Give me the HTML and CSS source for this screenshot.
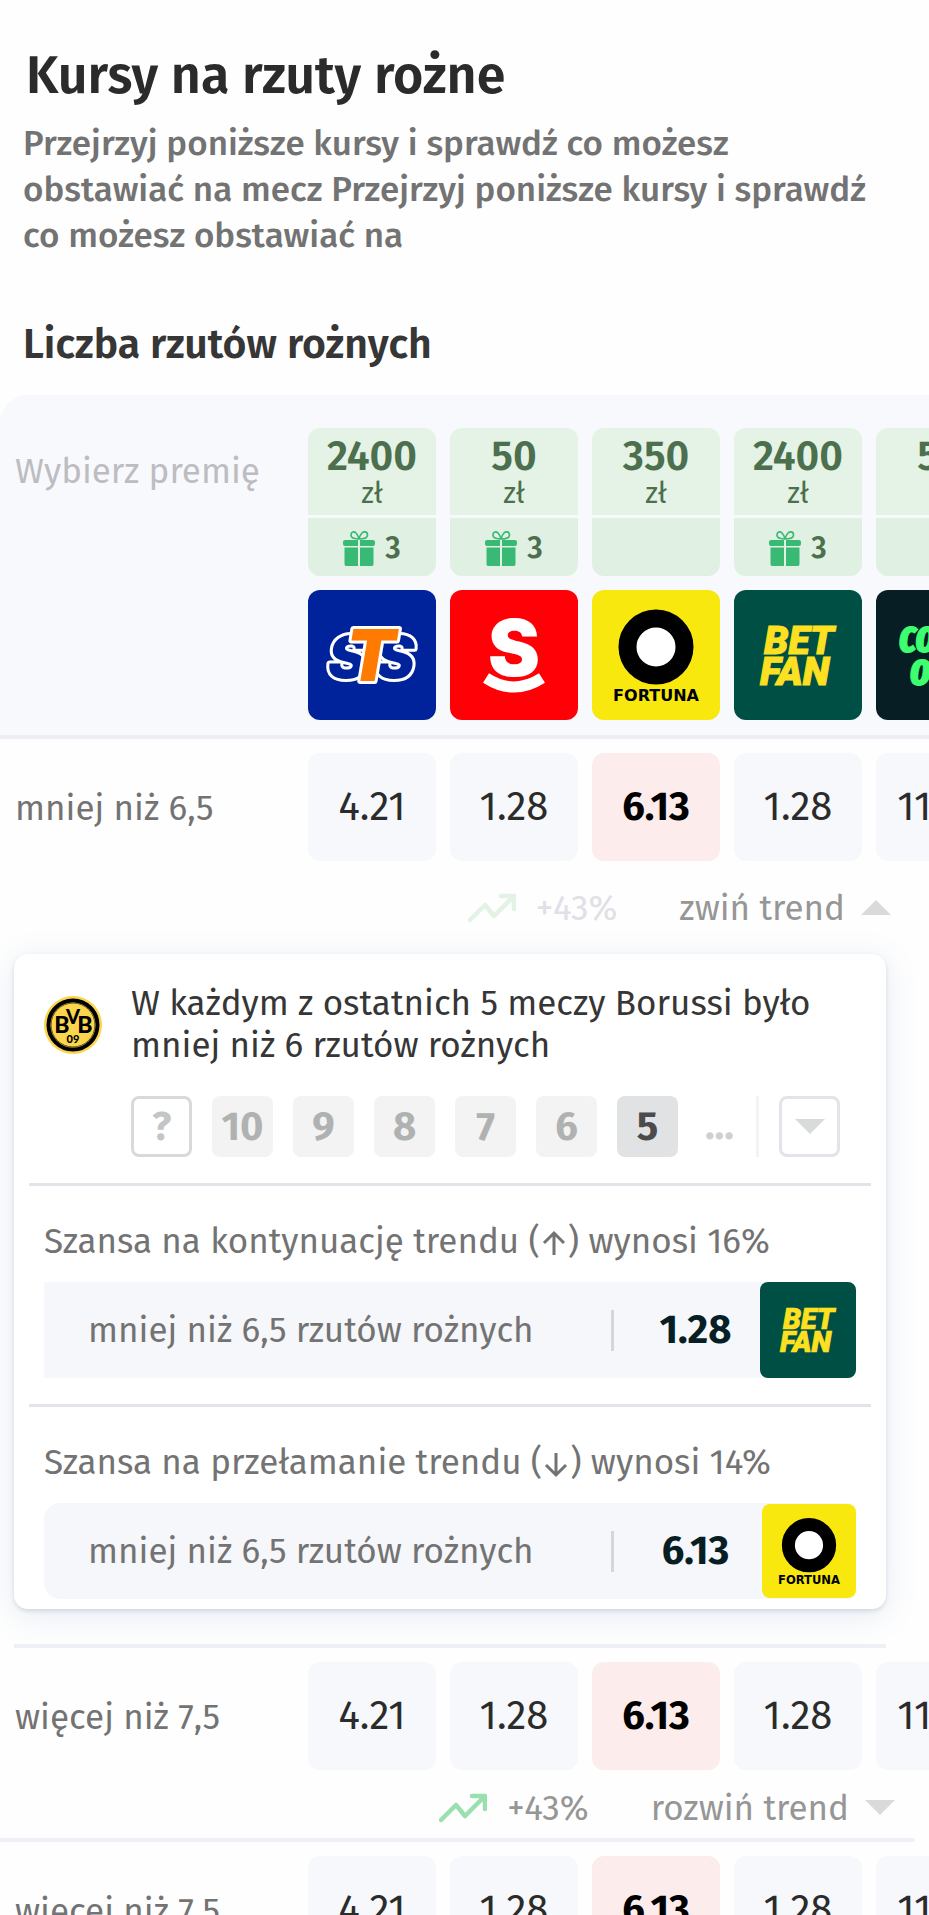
FILE: index.html
```
<!DOCTYPE html>
<html lang="pl">
<head>
  <meta charset="UTF-8">
  <meta name="viewport" content="width=device-width, initial-scale=1.0">
  <title>Kursy na rzuty rożne</title>
  <link rel="stylesheet" href="styles.css">
</head>
<body>
  <!-- Shared icons and bookmaker logos -->
  <svg class="sprite" aria-hidden="true">
    <symbol id="gift" viewBox="0 0 32 36">
      <path d="M16 9C13 9 8 8.500 8 5C8 1.500 11 1 13 3C15 5 16 9 16 9C16 9 17 5 19 3C21 1 24.500 1.500 24.500 5C24.500 8.500 19 9 16 9Z" fill="none" stroke="#38ba74" stroke-width="1.700"/>
      <path d="M2 10H15V16H2Q0 16 0 14V12Q0 10 2 10ZM17 10H30Q32 10 32 12V14Q32 16 30 16H17Z" fill="#38ba74"/>
      <path d="M1.500 17.500H15V36H3Q1.500 36 1.500 34ZM17 17.500H30.500V34Q30.500 36 29 36H17Z" fill="#38ba74"/>
    </symbol>
    <symbol id="trend" viewBox="0 0 48 30">
      <path d="M2 27L17 12L26 23L45 4M33 3H46V16" fill="none" stroke="currentColor" stroke-width="4.500" stroke-linecap="round" stroke-linejoin="round"/>
    </symbol>
    <symbol id="sts" viewBox="0 0 128 130">
      <g class="logo-text" stroke="#fff" stroke-linejoin="round" paint-order="stroke">
        <text x="20" y="88" font-size="58" stroke-width="6" fill="#00239c">S</text>
        <text x="68" y="88" font-size="58" stroke-width="6" fill="#00239c">S</text>
        <text x="38" y="91" font-size="72" stroke-width="6" fill="#ff7a00">T</text>
      </g>
    </symbol>
    <symbol id="superbet" viewBox="0 0 128 130">
      <text class="logo-text upright" x="64" y="86" font-size="78" text-anchor="middle" fill="#fff">S</text>
      <path d="M36 88Q64 106 92 88" fill="none" stroke="#fff" stroke-width="11"/>
    </symbol>
    <symbol id="fortuna" viewBox="0 0 128 130">
      <circle cx="64" cy="57" r="28.500" fill="#fff" stroke="#000" stroke-width="18"/>
      <text class="logo-text wide" x="64" y="111" font-size="16" text-anchor="middle">FORTUNA</text>
    </symbol>
    <symbol id="betfan" viewBox="0 0 128 130">
      <g class="logo-text slim" fill="#fde021" stroke="#fde021" stroke-width="1" font-size="39">
        <text x="30" y="64">BET</text>
        <text x="26" y="95">FAN</text>
      </g>
    </symbol>
    <symbol id="comeon" viewBox="0 0 128 130">
      <g class="logo-text narrow" fill="#3dff70" stroke="#3dff70" stroke-width="1" font-size="35">
        <text x="23" y="62">COME</text>
        <text x="34" y="95">ON!</text>
      </g>
    </symbol>
    <symbol id="bvb" viewBox="0 0 58 58">
      <circle cx="29" cy="29" r="29" fill="#fbd54b"/>
      <circle cx="29" cy="29" r="24.500" fill="none" stroke="#000" stroke-width="4"/>
      <circle cx="29" cy="29" r="22" fill="none" stroke="#5d4f20" stroke-width="1"/>
      <g font-family="Lato" font-weight="900" text-anchor="middle">
        <text x="18" y="37" font-size="23">B</text>
        <text x="41" y="37" font-size="23">B</text>
        <text x="29" y="28" font-size="20">V</text>
        <text x="29" y="47" font-size="11">09</text>
      </g>
    </symbol>
  </svg>

  <header class="intro">
    <h1 class="title">Kursy na rzuty rożne</h1>
    <p class="lead">Przejrzyj poniższe kursy i sprawdź co możesz obstawiać na mecz Przejrzyj poniższe kursy i sprawdź co możesz obstawiać na</p>
    <h2 class="subtitle">Liczba rzutów rożnych</h2>
  </header>

  <main class="odds">
    <table class="odds-table">
      <colgroup>
        <col class="col-label">
        <col class="col-odd"><col class="col-odd"><col class="col-odd"><col class="col-odd">
        <col>
      </colgroup>
      <thead>
        <tr>
          <th class="bonus-label" scope="col">Wybierz premię</th>
          <th scope="col">
            <a class="bonus" href="#"><span class="amount"><b>2400</b>zł</span><span class="gifts"><svg class="gift"><use href="#gift"/></svg>3</span></a>
            <a class="logo sts" href="#" aria-label="STS"><svg><use href="#sts"/></svg></a>
          </th>
          <th scope="col">
            <a class="bonus" href="#"><span class="amount"><b>50</b>zł</span><span class="gifts"><svg class="gift"><use href="#gift"/></svg>3</span></a>
            <a class="logo superbet" href="#" aria-label="Superbet"><svg><use href="#superbet"/></svg></a>
          </th>
          <th scope="col">
            <a class="bonus" href="#"><span class="amount"><b>350</b>zł</span><span class="gifts"></span></a>
            <a class="logo fortuna" href="#" aria-label="Fortuna"><svg><use href="#fortuna"/></svg></a>
          </th>
          <th scope="col">
            <a class="bonus" href="#"><span class="amount"><b>2400</b>zł</span><span class="gifts"><svg class="gift"><use href="#gift"/></svg>3</span></a>
            <a class="logo betfan" href="#" aria-label="Betfan"><svg><use href="#betfan"/></svg></a>
          </th>
          <th scope="col">
            <a class="bonus" href="#"><span class="amount"><b>50</b>zł</span><span class="gifts"></span></a>
            <a class="logo comeon" href="#" aria-label="ComeOn"><svg><use href="#comeon"/></svg></a>
          </th>
        </tr>
      </thead>
      <tbody>
        <tr class="odds-row">
          <th scope="row">mniej niż 6,5</th>
          <td><button class="odd">4.21</button></td>
          <td><button class="odd">1.28</button></td>
          <td><button class="odd best">6.13</button></td>
          <td><button class="odd">1.28</button></td>
          <td><button class="odd">11.28</button></td>
        </tr>
        <tr>
          <td colspan="6">
            <div class="trend-bar open">
              <span class="change"><svg class="trend-icon"><use href="#trend"/></svg>+43%</span>
              <button class="toggle">zwiń trend<span class="arrow up"></span></button>
            </div>
            <section class="card">
              <div class="card-top">
                <svg class="club"><use href="#bvb"/></svg>
                <div class="card-body">
                  <p class="card-title">W każdym z ostatnich 5 meczy Borussi było mniej niż 6 rzutów rożnych</p>
                  <div class="chips">
                    <button class="chip outline">?</button>
                    <button class="chip">10</button>
                    <button class="chip">9</button>
                    <button class="chip">8</button>
                    <button class="chip">7</button>
                    <button class="chip">6</button>
                    <button class="chip active">5</button>
                    <span class="more">...</span>
                    <button class="chip outline pale" aria-label="Więcej"><span class="arrow down"></span></button>
                  </div>
                </div>
              </div>
              <div class="chance">
                <h3 class="chance-title">Szansa na kontynuację trendu (<svg class="dir" viewBox="0 0 24 28"><path d="M12 26V4M2 14L12 4L22 14"/></svg>) wynosi 16%</h3>
                <a class="bet" href="#">
                  <span class="bet-name">mniej niż 6,5 rzutów rożnych</span>
                  <b class="bet-odd">1.28</b>
                  <span class="logo small betfan"><svg><use href="#betfan"/></svg></span>
                </a>
              </div>
              <div class="chance">
                <h3 class="chance-title">Szansa na przełamanie trendu (<svg class="dir" viewBox="0 0 24 28"><path d="M12 3V25M2 15L12 25L22 15"/></svg>) wynosi 14%</h3>
                <a class="bet rounded" href="#">
                  <span class="bet-name">mniej niż 6,5 rzutów rożnych</span>
                  <b class="bet-odd">6.13</b>
                  <span class="logo small fortuna"><svg><use href="#fortuna"/></svg></span>
                </a>
              </div>
            </section>
            <hr class="card-line">
          </td>
        </tr>
        <tr class="odds-row">
          <th scope="row">więcej niż 7,5</th>
          <td><button class="odd">4.21</button></td>
          <td><button class="odd">1.28</button></td>
          <td><button class="odd best">6.13</button></td>
          <td><button class="odd">1.28</button></td>
          <td><button class="odd">11.28</button></td>
        </tr>
        <tr>
          <td colspan="6">
            <div class="trend-bar">
              <span class="change"><svg class="trend-icon"><use href="#trend"/></svg>+43%</span>
              <button class="toggle">rozwiń trend<span class="arrow down"></span></button>
            </div>
            <hr class="row-line">
          </td>
        </tr>
        <tr class="odds-row">
          <th scope="row">więcej niż 7,5</th>
          <td><button class="odd">4.21</button></td>
          <td><button class="odd">1.28</button></td>
          <td><button class="odd best">6.13</button></td>
          <td><button class="odd">1.28</button></td>
          <td><button class="odd">11.28</button></td>
        </tr>
      </tbody>
    </table>
  </main>
</body>
</html>
```
FILE: styles.css
```
* {
  margin: 0;
  padding: 0;
  box-sizing: border-box;
}

html, body {
  height: 100%;
  overflow: hidden;
}

body {
  font-family: "Fira Sans", "Noto Sans", sans-serif;
  font-size: 35px;
  color: #737373;
  background: #fefefe;
}

button {
  border: none;
  background: none;
  font: inherit;
  color: inherit;
  cursor: pointer;
}

a {
  color: inherit;
  text-decoration: none;
}

.sprite {
  display: none;
}

/* Intro */
.intro {
  padding: 41px 40px 0 23px;
}

.title {
  padding-left: 3px;
  font-size: 52px;
  font-weight: 600;
  line-height: 70px;
  color: #2b2b2b;
}

.lead {
  padding-top: 9px;
  font-weight: 500;
  line-height: 46px;
}

.subtitle {
  margin-top: 62px;
  padding-bottom: 25px;
  font-size: 41px;
  font-weight: 600;
  line-height: 50px;
  color: #363636;
}

/* Odds table */
.odds {
  overflow: hidden;
  border-radius: 28px 0 0 0;
}

.odds-table {
  width: 100%;
  table-layout: fixed;
  border-spacing: 0;
}

.col-label {
  width: 308px;
}

.col-odd {
  width: 142px;
}

th {
  font-weight: 400;
  text-align: left;
}

thead th {
  padding: 33px 14px 15px 0;
  vertical-align: top;
  background: #f8f9fd;
  border-bottom: 4px solid #ededf4;
}

thead .bonus-label {
  padding: 55px 0 0 15px;
  color: #bdbdc1;
}

.bonus {
  display: block;
  width: 128px;
  margin-bottom: 14px;
  border-radius: 12px;
  overflow: hidden;
  color: #4c6f4e;
}

.amount {
  display: flex;
  flex-direction: column;
  align-items: center;
  height: 87px;
  padding-top: 8px;
  background: #e4f3e5;
  font-size: 29px;
  line-height: 32px;
}

.amount b {
  font-size: 41px;
  font-weight: 600;
  line-height: 42px;
}

.gifts {
  display: flex;
  justify-content: center;
  align-items: center;
  gap: 10px;
  height: 58px;
  margin-top: 3px;
  padding-top: 2px;
  background: #e0f1e3;
  font-size: 30px;
  font-weight: 600;
}

.gift {
  width: 32px;
  height: 36px;
}

.logo {
  display: block;
  width: 128px;
  height: 130px;
  border-radius: 12px;
  overflow: hidden;
}

.logo svg {
  display: block;
  width: 100%;
  height: 100%;
}

.logo-text {
  font-family: Inter, sans-serif;
  font-weight: 900;
  font-style: italic;
}

.upright {
  font-style: normal;
}

.wide {
  font-family: "DejaVu Sans", sans-serif;
  font-style: normal;
}

.slim {
  font-family: Roboto, sans-serif;
}

.narrow {
  font-family: "Fira Sans Extra Condensed", "Fira Sans Condensed", "Fira Sans", sans-serif;
}

.sts { background: #00239c; }
.superbet { background: #ff0006; }
.fortuna { background: #f9e80d; }
.betfan { background: #004f44; }
.comeon { background: #071e24; }

/* Rows */
.odds-row th {
  padding: 15px 0 0 15px;
}

.odds-row td {
  padding: 14px 14px 0 0;
}

.odd {
  display: block;
  width: 128px;
  height: 108px;
  border-radius: 12px;
  background: #f7f8fb;
  font-size: 40px;
  color: #2b2b2b;
}

.best {
  background: #fdecec;
  font-weight: 700;
  color: #000;
}

.trend-bar {
  display: flex;
  justify-content: flex-end;
  align-items: center;
  gap: 62px;
  height: 68px;
  padding: 7px 34px 0 0;
  color: #969696;
}

.change {
  display: flex;
  align-items: center;
  gap: 20px;
}

.trend-icon {
  width: 48px;
  height: 30px;
  color: #9adfae;
}

.open {
  height: 93px;
  padding: 0 38px 0 0;
}

.open .change {
  color: #e0e0e6;
}

.open .trend-icon {
  color: #e2f3e5;
}

.toggle {
  display: flex;
  align-items: center;
  gap: 16px;
}

.arrow {
  border: 15px solid transparent;
}

.up {
  border-top: none;
  border-bottom-color: #d9dada;
}

.down {
  border-bottom: none;
  border-top-color: #d9dada;
}

.row-line, .card-line {
  height: 4px;
  margin-right: 15px;
  border: none;
  background: #edf0f6;
}

.card-line {
  margin: 35px 43px 0 14px;
}

/* Trend card */
.card {
  margin: 0 43px 0 14px;
  padding: 0 15px 10px;
  border-radius: 14px;
  background: #fff;
  box-shadow: 0 2px 4px rgba(60, 70, 100, 0.16), 0 6px 32px rgba(80, 110, 180, 0.14);
}

.card-top {
  display: flex;
  gap: 29px;
  padding: 28px 15px 26px;
}

.club {
  flex: none;
  width: 58px;
  height: 58px;
  margin-top: 14px;
}

.card-body {
  flex: 1;
}

.card-title {
  line-height: 42px;
  color: #363636;
}

.chips {
  display: flex;
  gap: 20px;
  margin-top: 30px;
}

.chip {
  display: flex;
  justify-content: center;
  align-items: center;
  width: 61px;
  height: 61px;
  border-radius: 8px;
  background: #f3f3f3;
  font-size: 40px;
  font-weight: 700;
  color: #b0b2b2;
}

.outline {
  border: 3px solid #d8dada;
  background: #fff;
  color: #c4c5c6;
}

.pale {
  border-color: #e2e4e9;
}

.active {
  background: #e1e2e4;
  color: #4b4b4b;
}

.more {
  width: 61px;
  border-right: 3px solid #f3f3f3;
  padding-left: 7px;
  font-size: 40px;
  font-weight: 700;
  line-height: 60px;
  color: #cfd1d1;
}

.chance {
  padding: 31px 15px 26px;
  border-top: 3px solid #e2e4e9;
}

.chance:last-child {
  padding-bottom: 0;
}

.chance-title {
  margin-bottom: 17px;
  font-size: 35px;
  font-weight: 400;
  line-height: 48px;
}

.dir {
  width: 24px;
  height: 28px;
  margin: 0 2px;
  vertical-align: -4px;
  fill: none;
  stroke: currentColor;
  stroke-width: 3;
}

.bet {
  display: flex;
  align-items: center;
  height: 96px;
  padding-left: 44px;
  background: #f6f7fa;
  border-radius: 0 12px 12px 0;
}

.rounded {
  border-radius: 16px 12px 12px 16px;
}

.bet-name {
  flex: 1;
}

.bet-odd {
  width: 149px;
  padding-left: 17px;
  border-left: 3px solid #d4d6d8;
  font-size: 40px;
  line-height: 41px;
  text-align: center;
  color: #071e24;
}

.small {
  width: 96px;
  height: 96px;
  border-radius: 8px;
}

.small.fortuna {
  width: 94px;
  height: 94px;
  margin-left: 2px;
}
```
